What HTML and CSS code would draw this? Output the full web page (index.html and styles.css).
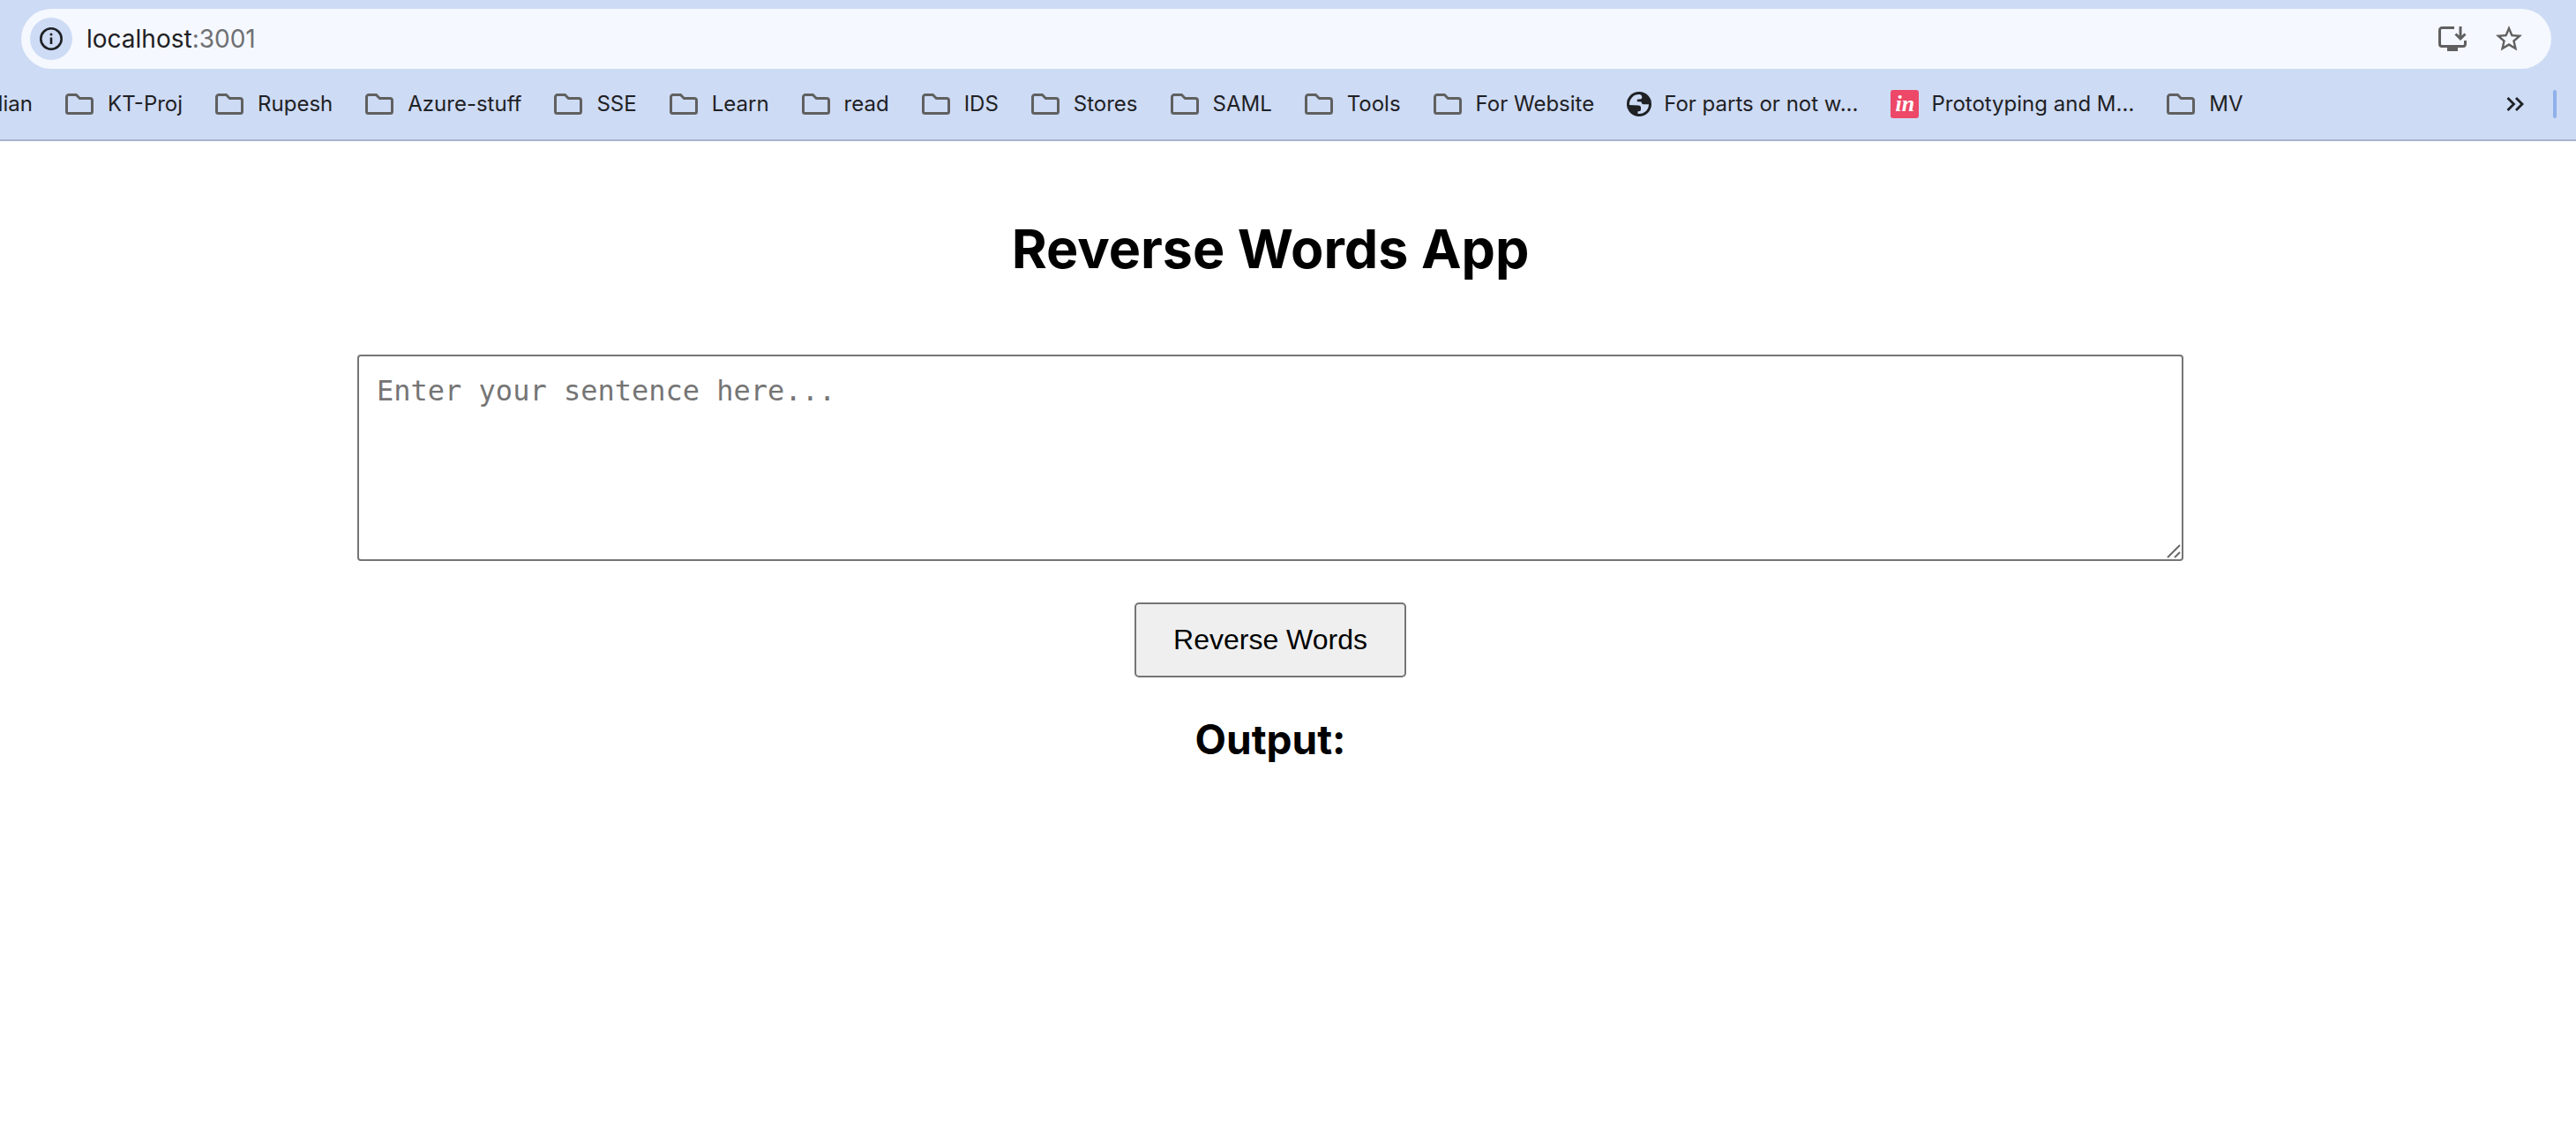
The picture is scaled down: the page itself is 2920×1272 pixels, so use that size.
FILE: index.html
```html
<!DOCTYPE html>
<html lang="en">
<head>
<meta charset="utf-8">
<title>Reverse Words App</title>
<link rel="stylesheet" href="styles.css">
</head>
<body>
<svg class="sprite" aria-hidden="true">
  <symbol id="folder" viewBox="0 0 32 24">
    <path d="M4 1.500h8.400l4 4H28a2.500 2.500 0 0 1 2.500 2.500v12.500a2 2 0 0 1-2 2h-25a2 2 0 0 1-2-2V4A2.500 2.500 0 0 1 4 1.500z" fill="none" stroke="currentColor" stroke-width="3"/>
  </symbol>
</svg>
<header class="browser">
  <div class="omnibox">
    <button class="site-info" type="button" aria-label="View site information">
      <svg width="28" height="28" viewBox="0 0 28 28"><circle cx="14" cy="14" r="11.700" fill="none" stroke="currentColor" stroke-width="2.600"/><circle cx="14" cy="9" r="1.500" fill="currentColor"/><path d="M14 12.500v7.500" stroke="currentColor" stroke-width="2.600"/></svg>
    </button>
    <div class="address">localhost<span class="port">:3001</span></div>
    <div class="actions">
      <button type="button" aria-label="Install app">
        <svg width="32" height="28" viewBox="0 0 32 28"><path d="M18 1.500H4A2.500 2.500 0 0 0 1.500 4v16A2.500 2.500 0 0 0 4 22.500h24a2.500 2.500 0 0 0 2.500-2.500v-4" fill="none" stroke="currentColor" stroke-width="3"/><path d="M10 23h12v5H10z" fill="currentColor"/><path d="M25 0v13M19.500 8.500l5.500 5.500 5.500-5.500" fill="none" stroke="currentColor" stroke-width="3"/></svg>
      </button>
      <button type="button" aria-label="Bookmark this tab">
        <svg width="30" height="30" viewBox="2 2 20 20"><path fill="currentColor" d="M22 9.240l-7.190-.620L12 2 9.190 8.630 2 9.240l5.460 4.730L5.820 21 12 17.270 18.180 21l-1.630-7.030L22 9.240zM12 15.400l-3.760 2.270 1-4.280-3.320-2.880 4.380-.380L12 6.100l1.710 4.040 4.380.380-3.320 2.880 1 4.280L12 15.400z"/></svg>
      </button>
    </div>
  </div>
  <nav class="bookmarks" aria-label="Bookmarks">
    <a class="clipped" href="#">dian</a>
    <a href="#"><svg class="folder"><use href="#folder"/></svg>KT-Proj</a>
    <a href="#"><svg class="folder"><use href="#folder"/></svg>Rupesh</a>
    <a href="#"><svg class="folder"><use href="#folder"/></svg>Azure-stuff</a>
    <a href="#"><svg class="folder"><use href="#folder"/></svg>SSE</a>
    <a href="#"><svg class="folder"><use href="#folder"/></svg>Learn</a>
    <a href="#"><svg class="folder"><use href="#folder"/></svg>read</a>
    <a href="#"><svg class="folder"><use href="#folder"/></svg>IDS</a>
    <a href="#"><svg class="folder"><use href="#folder"/></svg>Stores</a>
    <a href="#"><svg class="folder"><use href="#folder"/></svg>SAML</a>
    <a href="#"><svg class="folder"><use href="#folder"/></svg>Tools</a>
    <a href="#"><svg class="folder"><use href="#folder"/></svg>For Website</a>
    <a class="site" href="#"><svg width="28" height="28" viewBox="0 0 28 28"><circle cx="14" cy="14" r="14" fill="#1f2124"/><path d="M3 15A11 11 0 0 1 15 3q2.300.8 2.300 3 0 2.500-2.500 2.500h-2q-1 0-1 1v1.800h3.500q1.700 0 1.700 1.500 0 1.500 2 1.500H25A11 11 0 0 1 12.500 25v-2.700h1q2.500 0 2.500-2.500V18q0-2.500-3-2.500z" fill="#cddbf5"/></svg>For parts or not w...</a>
    <a class="site" href="#"><span class="invision" aria-hidden="true">in</span>Prototyping and M...</a>
    <a href="#"><svg class="folder"><use href="#folder"/></svg>MV</a>
    <button class="more" type="button" aria-label="More bookmarks">
      <svg width="20" height="16" viewBox="0 0 20 16"><path d="M1.500 1l7 7-7 7M11 1l7 7-7 7" fill="none" stroke="currentColor" stroke-width="2.800"/></svg>
    </button>
    <span class="divider"></span>
  </nav>
</header>
<main class="app">
  <h1>Reverse Words App</h1>
  <div class="field">
    <textarea aria-label="Sentence" placeholder="Enter your sentence here..."></textarea>
    <svg class="grip" width="16" height="16" viewBox="0 0 16 16"><path d="M1 15L15 1M9 15l6-6" stroke="#6a6a6a" stroke-width="2"/></svg>
  </div>
  <button class="reverse" type="button">Reverse Words</button>
  <h2>Output:</h2>
</main>
</body>
</html>
```

FILE: styles.css
```css
* { box-sizing: border-box; }

body {
  margin: 0;
  background: #fff;
  color: #000;
  font-family: Inter, "Liberation Sans", sans-serif;
}

button {
  font: inherit;
  color: inherit;
  border: 0;
  padding: 0;
  background: none;
}

svg { display: block; flex: none; }

.sprite { position: absolute; width: 0; height: 0; }

/* Browser toolbar */
.browser {
  background: #cddbf5;
  border-bottom: 2px solid #a8b3cf;
  padding-top: 10px;
  color: #1f2124;
  overflow: hidden;
}

.omnibox {
  display: flex;
  align-items: center;
  height: 68px;
  margin: 0 28px 0 24px;
  padding: 0 33px 0 10px;
  border-radius: 34px;
  background: #f5f8fe;
}

.site-info {
  display: grid;
  place-items: center;
  width: 48px;
  height: 48px;
  border-radius: 50%;
  background: #cddbf5;
}

.address {
  margin-left: 16px;
  font-size: 28px;
  line-height: 36px;
}

.port { color: #6e7073; }

.actions {
  display: flex;
  align-items: center;
  gap: 33px;
  margin-left: auto;
  color: #606060;
}

.bookmarks {
  display: flex;
  align-items: center;
  gap: 37px;
  height: 80px;
  padding-right: 22px;
  font-size: 24px;
  line-height: 32px;
  white-space: nowrap;
}

.bookmarks a {
  display: flex;
  align-items: center;
  gap: 16px;
  color: inherit;
  text-decoration: none;
}

.bookmarks .clipped {
  justify-content: flex-end;
  width: 37px;
}

.bookmarks .site { gap: 14px; }

.folder {
  width: 32px;
  height: 24px;
  color: #606060;
}

.invision {
  width: 32px;
  height: 32px;
  border-radius: 3px;
  background: #ed4868;
  color: #fff;
  font: italic bold 26px/32px "Liberation Serif", serif;
  text-align: center;
}

.more { margin-left: auto; }

.divider {
  width: 4px;
  height: 32px;
  margin-left: -4px;
  border-radius: 2px;
  background: #8fb0ea;
}

/* Page */
.app {
  display: flex;
  flex-direction: column;
  align-items: center;
  padding: 80px 40px 40px 0;
}

h1 {
  margin: 0;
  font-size: 61px;
  line-height: 84px;
}

.field {
  position: relative;
  width: calc(70% + 54px);
  margin-top: 78px;
}

textarea {
  display: block;
  width: 100%;
  height: 234px;
  padding: 20px;
  border: 2px solid #757575;
  border-radius: 4px;
  resize: none;
  font: 32px/38px "DejaVu Sans Mono", monospace;
}

textarea::placeholder { color: #757575; }

.grip { position: absolute; right: 3px; bottom: 3px; }

.reverse {
  margin-top: 47px;
  padding: 20px 42px;
  border: 2px solid #757575;
  border-radius: 5px;
  background: #efefef;
  color: #000;
  font: 32px/41px "Liberation Sans", Arial, sans-serif;
}

h2 {
  margin: 40px 0 0;
  font-size: 46px;
  line-height: 60px;
}
```
